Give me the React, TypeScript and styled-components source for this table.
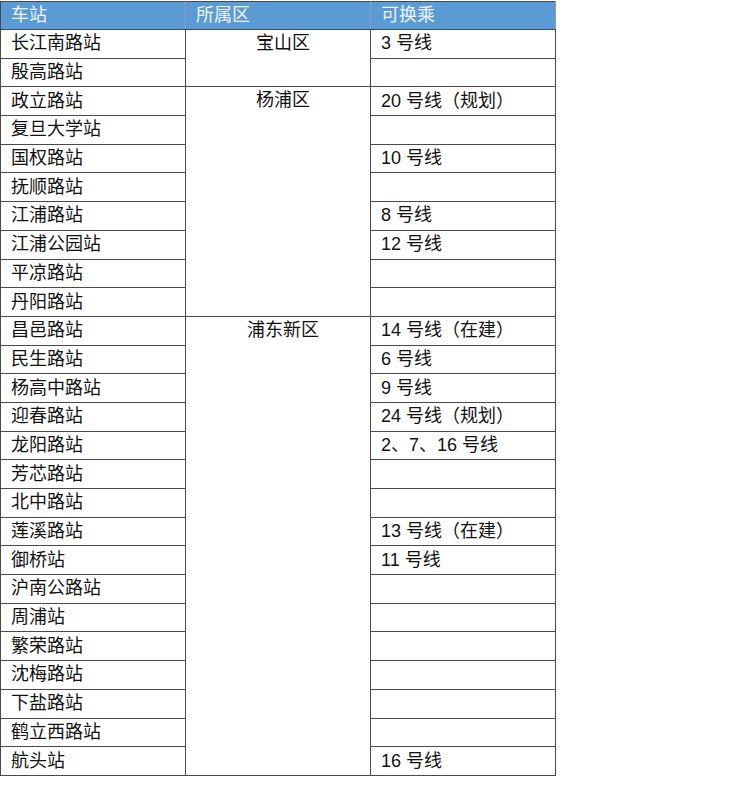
import React from "react"
import styled, { createGlobalStyle } from "styled-components"

const GlobalStyle = createGlobalStyle`
  html, body {
    margin: 0;
    padding: 0;
    background: #ffffff;
  }
  body {
    font-family: "Liberation Sans", "Noto Sans CJK SC", sans-serif;
  }
`

const Page = styled.div`
  padding-top: 1px;
`

const Table = styled.table`
  width: 555px;
  table-layout: fixed;
  border-collapse: collapse;
  font-size: 18px;
  color: #111;
`

const HeadCell = styled.th`
  height: 27px;
  padding: 0 0 0 10px;
  background: #5b9bd5;
  color: #eef4fb;
  font-weight: normal;
  text-align: left;
  border: 1px solid #3d4a58;
  border-right-color: #8a9db0;
  line-height: 27px;
`

const Cell = styled.td<{ $center?: boolean }>`
  height: 27.7px;
  padding: 0 0 0 10px;
  border: 1px solid #4a4a4a;
  text-align: ${(p) => (p.$center ? "center" : "left")};
  vertical-align: ${(p) => (p.$center ? "top" : "middle")};
  line-height: 27px;
  white-space: nowrap;
`

type Row = { station: string; district?: string; span?: number; transfer: string }

const rows: Row[] = [
  { station: "长江南路站", district: "宝山区", span: 2, transfer: "3 号线" },
  { station: "殷高路站", transfer: "" },
  { station: "政立路站", district: "杨浦区", span: 8, transfer: "20 号线（规划）" },
  { station: "复旦大学站", transfer: "" },
  { station: "国权路站", transfer: "10 号线" },
  { station: "抚顺路站", transfer: "" },
  { station: "江浦路站", transfer: "8 号线" },
  { station: "江浦公园站", transfer: "12 号线" },
  { station: "平凉路站", transfer: "" },
  { station: "丹阳路站", transfer: "" },
  { station: "昌邑路站", district: "浦东新区", span: 16, transfer: "14 号线（在建）" },
  { station: "民生路站", transfer: "6 号线" },
  { station: "杨高中路站", transfer: "9 号线" },
  { station: "迎春路站", transfer: "24 号线（规划）" },
  { station: "龙阳路站", transfer: "2、7、16 号线" },
  { station: "芳芯路站", transfer: "" },
  { station: "北中路站", transfer: "" },
  { station: "莲溪路站", transfer: "13 号线（在建）" },
  { station: "御桥站", transfer: "11 号线" },
  { station: "沪南公路站", transfer: "" },
  { station: "周浦站", transfer: "" },
  { station: "繁荣路站", transfer: "" },
  { station: "沈梅路站", transfer: "" },
  { station: "下盐路站", transfer: "" },
  { station: "鹤立西路站", transfer: "" },
  { station: "航头站", transfer: "16 号线" },
]

export default function App() {
  return (
    <Page>
      <GlobalStyle />
      <Table>
        <colgroup>
          <col style={{ width: 185 }} />
          <col style={{ width: 185 }} />
          <col style={{ width: 185 }} />
        </colgroup>
        <thead>
          <tr>
            <HeadCell>车站</HeadCell>
            <HeadCell>所属区</HeadCell>
            <HeadCell>可换乘</HeadCell>
          </tr>
        </thead>
        <tbody>
          {rows.map((r) => (
            <tr key={r.station}>
              <Cell>{r.station}</Cell>
              {r.district && (
                <Cell $center rowSpan={r.span}>
                  {r.district}
                </Cell>
              )}
              <Cell>{r.transfer}</Cell>
            </tr>
          ))}
        </tbody>
      </Table>
    </Page>
  )
}
